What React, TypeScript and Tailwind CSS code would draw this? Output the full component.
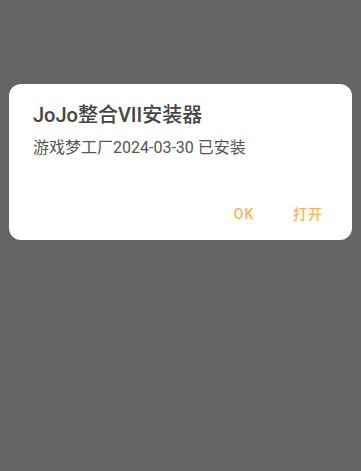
export default function App() {
  const font = { fontFamily: 'Roboto, "Noto Sans CJK SC", sans-serif' };
  return (
    <div className="h-[471px] w-full bg-[#646464] pt-[84px]" style={font}>
      <div className="mx-[9px] rounded-[12px] bg-white pt-[19px] pb-[8px]">
        <div className="px-[24px] text-[20px] leading-[24px] font-medium text-[#454545]">
          JoJo整合VII安装器
        </div>
        <div className="mt-[10px] px-[24px] text-[16px] leading-[22px] text-[#555555]">
          游戏梦工厂2024-03-30 已安装
        </div>
        <div className="mt-[37px] flex justify-end pr-[12px]">
          <button className="h-[36px] w-[64px] text-[14px] font-medium tracking-[1px] text-[#FFB34F]">
            OK
          </button>
          <button className="h-[36px] w-[64px] text-[14px] font-medium tracking-[1px] text-[#FFB34F]">
            打开
          </button>
        </div>
      </div>
    </div>
  );
}
